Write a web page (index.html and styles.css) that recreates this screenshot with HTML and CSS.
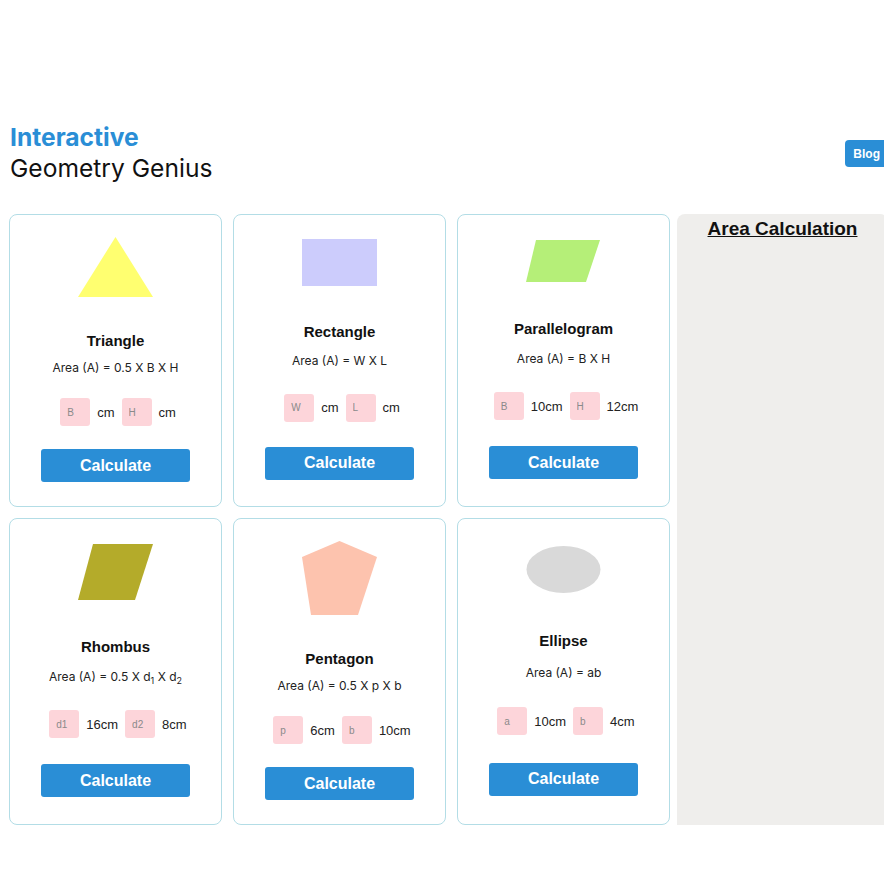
FILE: index.html
```html
<!DOCTYPE html>
<html lang="en">
<head>
    <meta charset="UTF-8">
    <meta name="viewport" content="width=device-width, initial-scale=1.0">
    <title>Interactive Geometry Genius</title>
    <link rel="stylesheet" href="styles.css">
</head>
<body>

    <div class="page">
        <div class="header">
            <h1 class="title">
                <span class="title-accent">Interactive</span>
                <span class="title-main">Geometry Genius</span>
            </h1>
            <button class="blog-button">Blog</button>
        </div>

        <div class="main">
            <div class="shapes">

                <div class="shape-card">
                    <svg class="shape" width="75" height="60" viewBox="0 0 75 60">
                        <polygon points="37.5,0 75,60 0,60" fill="#ffff70"/>
                    </svg>
                    <div class="shape-name">Triangle</div>
                    <div class="formula">Area (A) = 0.5 X B X H</div>
                    <div class="inputs">
                        <input type="text" placeholder="B">
                        <span>cm</span>
                        <input type="text" placeholder="H">
                        <span>cm</span>
                    </div>
                    <button class="calc-button">Calculate</button>
                </div>

                <div class="shape-card">
                    <svg class="shape" width="75" height="47" viewBox="0 0 75 47">
                        <rect x="0" y="0" width="75" height="47" fill="#ccccfc"/>
                    </svg>
                    <div class="shape-name">Rectangle</div>
                    <div class="formula">Area (A) = W X L</div>
                    <div class="inputs">
                        <input type="text" placeholder="W">
                        <span>cm</span>
                        <input type="text" placeholder="L">
                        <span>cm</span>
                    </div>
                    <button class="calc-button">Calculate</button>
                </div>

                <div class="shape-card">
                    <svg class="shape" width="75" height="42" viewBox="0 0 75 42">
                        <polygon points="10,0 74,0 60,42 0,42" fill="#b5ef78"/>
                    </svg>
                    <div class="shape-name">Parallelogram</div>
                    <div class="formula">Area (A) = B X H</div>
                    <div class="inputs">
                        <input type="text" placeholder="B">
                        <span>10cm</span>
                        <input type="text" placeholder="H">
                        <span>12cm</span>
                    </div>
                    <button class="calc-button">Calculate</button>
                </div>

                <div class="shape-card">
                    <svg class="shape" width="75" height="56" viewBox="0 0 75 56">
                        <polygon points="15,0 75,0 57,56 0,56" fill="#b4ab2a"/>
                    </svg>
                    <div class="shape-name">Rhombus</div>
                    <div class="formula">Area (A) = 0.5 X d<sub>1</sub> X d<sub>2</sub></div>
                    <div class="inputs">
                        <input type="text" placeholder="d1">
                        <span>16cm</span>
                        <input type="text" placeholder="d2">
                        <span>8cm</span>
                    </div>
                    <button class="calc-button">Calculate</button>
                </div>

                <div class="shape-card">
                    <svg class="shape" width="75" height="74" viewBox="0 0 75 74">
                        <polygon points="37.5,0 75,16 56,74 9,74 0,16" fill="#fdc3ae"/>
                    </svg>
                    <div class="shape-name">Pentagon</div>
                    <div class="formula">Area (A) = 0.5 X p X b</div>
                    <div class="inputs">
                        <input type="text" placeholder="p">
                        <span>6cm</span>
                        <input type="text" placeholder="b">
                        <span>10cm</span>
                    </div>
                    <button class="calc-button">Calculate</button>
                </div>

                <div class="shape-card">
                    <svg class="shape" width="75" height="47" viewBox="0 0 75 47">
                        <ellipse cx="37.5" cy="23.5" rx="37" ry="23.5" fill="#d9d9d9"/>
                    </svg>
                    <div class="shape-name">Ellipse</div>
                    <div class="formula">Area (A) = ab</div>
                    <div class="inputs">
                        <input type="text" placeholder="a">
                        <span>10cm</span>
                        <input type="text" placeholder="b">
                        <span>4cm</span>
                    </div>
                    <button class="calc-button">Calculate</button>
                </div>

            </div>

            <div class="result-panel">
                <h2>Area Calculation</h2>
            </div>
        </div>
    </div>

</body>
</html>
```

FILE: styles.css
```css
html, body {
    overflow: hidden;
}

body {
    font-family: "Liberation Sans", Arial, sans-serif;
    background-color: #ffffff;
    margin: 0;
    padding: 0;
}

.page {
    width: 879px;
    padding: 122px 0 0 9px;
}

.header {
    display: flex;
    justify-content: space-between;
    align-items: center;
    margin-bottom: 30px;
}

.title {
    margin: 0;
    font-family: Inter, "Liberation Sans", sans-serif;
    font-size: 24.6px;
    line-height: 31px;
    padding-left: 1px;
}

.title-accent {
    display: block;
    color: #2a8ed6;
    font-weight: 700;
}

.title-main {
    display: block;
    color: #111;
    font-weight: 400;
}

.blog-button {
    background-color: #2a8ed6;
    color: white;
    border: none;
    border-radius: 4px;
    font-family: "Liberation Sans", Arial, sans-serif;
    font-size: 12px;
    font-weight: bold;
    padding: 0 8px;
    height: 27px;
    margin-top: 1px;
    cursor: pointer;
}

.main {
    display: flex;
    align-items: stretch;
}

.shapes {
    display: grid;
    grid-template-columns: repeat(3, 213px);
    column-gap: 11px;
    row-gap: 11px;
}

.shape-card {
    background-color: white;
    border: 1px solid #b3dde6;
    border-radius: 8px;
    padding: 22px 0 24px;
    display: flex;
    flex-direction: column;
    align-items: center;
    justify-content: space-evenly;
}

.shape {
    display: block;
    flex-shrink: 0;
}

.shape-name {
    font-size: 15px;
    font-weight: bold;
    color: #111;
    line-height: 18px;
    margin-top: 35px;
}

.formula {
    font-family: Inter, "Liberation Sans", sans-serif;
    font-size: 12px;
    color: #222;
    line-height: 14px;
    margin-top: 11px;
}

.formula sub {
    font-size: 9px;
    line-height: 0;
}

.inputs {
    display: flex;
    align-items: center;
    gap: 7px;
    margin-top: 23px;
    padding-left: 5px;
    font-size: 13px;
    color: #222;
}

.inputs input {
    width: 30px;
    height: 28px;
    box-sizing: border-box;
    border: none;
    border-radius: 3px;
    background-color: #fdd5da;
    padding: 0 0 0 7px;
    font-family: "Liberation Sans", Arial, sans-serif;
    font-size: 10px;
}

.inputs input::placeholder {
    color: #8a8a8a;
}

.calc-button {
    background-color: #2a8ed6;
    color: white;
    border: none;
    border-radius: 3px;
    width: 149px;
    height: 33px;
    margin-top: 23px;
    font-family: "Liberation Sans", Arial, sans-serif;
    font-size: 16px;
    font-weight: bold;
    cursor: pointer;
}

.calc-button:hover {
    background-color: #237cbd;
}

.result-panel {
    background-color: #efeeec;
    width: 213px;
    margin-left: 7px;
    border-radius: 8px 8px 0 0;
    text-align: center;
}

.result-panel h2 {
    margin: 4px 0 0;
    font-size: 19px;
    line-height: 22px;
    text-decoration: underline;
    color: #111;
}
```
